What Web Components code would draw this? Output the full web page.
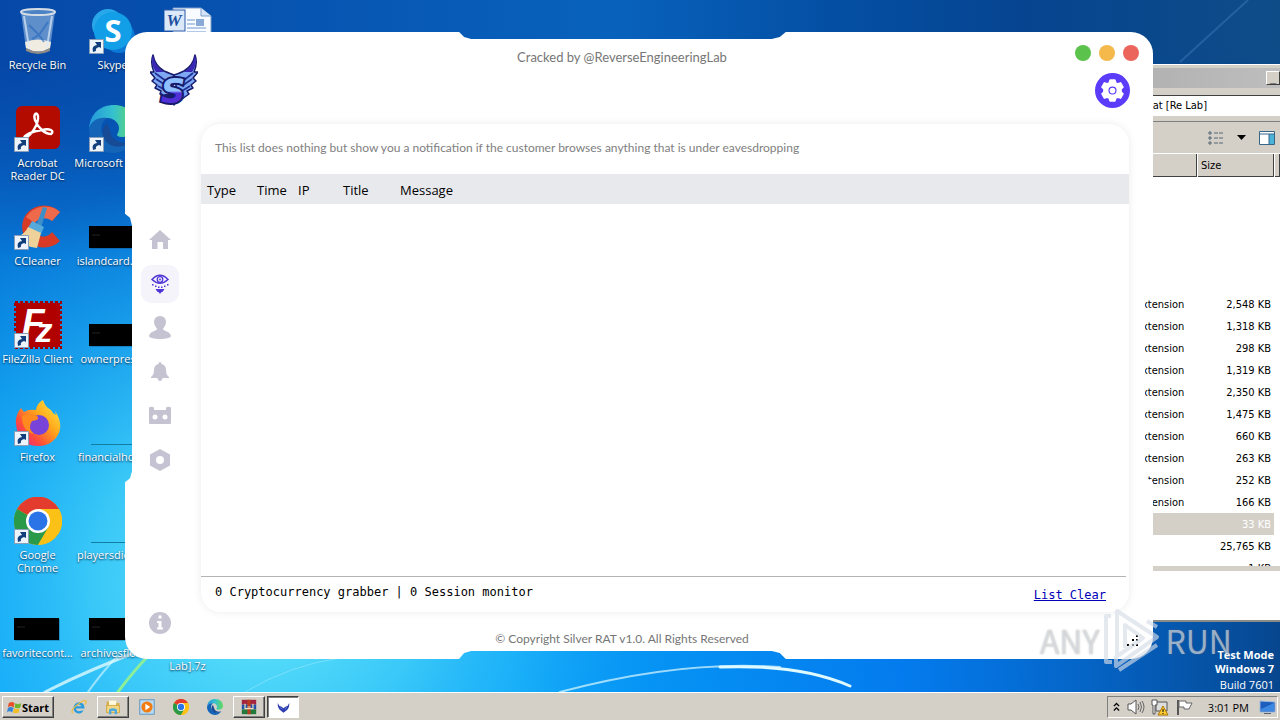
<!DOCTYPE html>
<html lang="en">
<head>
<meta charset="utf-8">
<title>Silver RAT</title>
<style>
    html, body {
        height: 100%;
        margin: 0;
    }
    body {
        overflow: hidden;
        font: 11px/13px "Open Sans", "Noto Sans", sans-serif;
        color: #000;
    }
</style>
</head>
<body>
<desk-top>
    <desk-icon slot="icons" icon="bin">Recycle Bin</desk-icon>
    <desk-icon slot="icons" icon="acrobat" shortcut>Acrobat<br>Reader DC</desk-icon>
    <desk-icon slot="icons" icon="ccleaner" shortcut>CCleaner</desk-icon>
    <desk-icon slot="icons" icon="filezilla" shortcut>FileZilla Client</desk-icon>
    <desk-icon slot="icons" icon="firefox" shortcut>Firefox</desk-icon>
    <desk-icon slot="icons" icon="chrome" shortcut>Google<br>Chrome</desk-icon>
    <desk-icon slot="icons" icon="thumb">favoritecont...</desk-icon>
    <desk-icon slot="icons" icon="skype" shortcut>Skype</desk-icon>
    <desk-icon slot="icons" icon="edge" shortcut>Microsoft Edge</desk-icon>
    <desk-icon slot="icons" icon="thumb">islandcard.jpg</desk-icon>
    <desk-icon slot="icons" icon="thumb">ownerpres...</desk-icon>
    <desk-icon slot="icons" icon="line">financialhot...</desk-icon>
    <desk-icon slot="icons" icon="line">playersdie.jpg</desk-icon>
    <desk-icon slot="icons" icon="thumb">archivesflo...</desk-icon>
    <desk-icon slot="icons" icon="word"></desk-icon>
    <desk-icon slot="icons" class="last" icon="none"><br>Lab].7z</desk-icon>

    <file-explorer slot="windows"></file-explorer>
    <silver-window slot="windows" heading="Cracked by @ReverseEngineeringLab">
        <nav-item slot="nav" icon="home" label="Home"></nav-item>
        <nav-item slot="nav" icon="eye" label="Monitor" active></nav-item>
        <nav-item slot="nav" icon="user" label="Clients"></nav-item>
        <nav-item slot="nav" icon="bell" label="Notifications"></nav-item>
        <nav-item slot="nav" icon="robot" label="Builder"></nav-item>
        <nav-item slot="nav" icon="nut" label="Options"></nav-item>
        <nav-item slot="about" icon="info" label="About"></nav-item>
        <monitor-card></monitor-card>
        <span slot="footer">© Copyright Silver RAT v1.0. All Rights Reserved</span>
    </silver-window>
    <task-bar slot="taskbar"></task-bar>
</desk-top>

<script>
const ICONS = {
    none: ["0 0 48 48", ""],
    bin: ["0 0 48 48", `
        <path d="M7 5 L12 42 Q24 50 36 42 L41 5Z" fill="#a9c8e6" fill-opacity=".55"/>
        <path d="M11 35 Q24 30 37 35 L36 41 Q24 48 12 41Z" fill="#f1ece2"/>
        <path d="M12 41 Q24 48 36 41 L36 44 Q24 50 12 44Z" fill="#8e8b86"/>
        <path d="M10 9 L15 40 M38 9 L33 40" stroke="#dbeaf8" stroke-width="2" fill="none" opacity=".7"/>
        <path d="M15 18 L25 28 L34 15 M18 32 L25 28 L30 35" stroke="#2468bd" stroke-width="2" fill="none" opacity=".6"/>
        <ellipse cx="24" cy="5" rx="17" ry="3" fill="#4b83c4" stroke="#d5dde4" stroke-width="2"/>`],
    acrobat: ["0 0 48 48", `
        <rect x="2" y="1" width="44" height="43" rx="6" fill="#b30b00"/>
        <path d="M10 34 C17 31 25 19 24 11 C23 6 19 9 21 15 C24 23 31 29 37 29 C41 26 36 23 28 25 C19 26 9 30 10 34Z" fill="none" stroke="#fff" stroke-width="2.4"/>`],
    ccleaner: ["0 0 48 48", `
        <path d="M46 9 A22 21 0 1 0 46 38 L38 29 A11 10 0 1 1 38 18Z" fill="#d93a25"/>
        <path d="M46 9 A22 21 0 0 0 12 14 L21 20 A11 10 0 0 1 38 18Z" fill="#ee6a4b"/>
        <path d="M29 4 L33 5 L27 25 L22 23Z" fill="#3c8fc8"/>
        <path d="M18 18 L30 24 L27 31 L14 25Z" fill="#55aadc"/>
        <path d="M14 24 L27 30 L23 45 Q10 44 3 34Q11 31 14 24Z" fill="#efd29a"/>`],
    filezilla: ["0 0 48 48", `
        <rect x="2" y="2" width="44" height="44" fill="#b00000"/>
        <rect x="1" y="1" width="46" height="46" fill="none" stroke="#a00000" stroke-width="2" stroke-dasharray="3 2"/>
        <text x="8" y="34" font-family="Liberation Sans" font-size="37" font-weight="bold" font-style="italic" fill="#fff">F<tspan font-size="34" dx="-9" dy="7">z</tspan></text>`],
    firefox: ["0 0 48 48", `
        <defs><linearGradient id="ff" x1="1" y1="0" x2="0" y2="1"><stop offset="0" stop-color="#fff04a"/><stop offset=".4" stop-color="#ffa71b"/><stop offset=".7" stop-color="#ff4b3b"/><stop offset="1" stop-color="#e3189d"/></linearGradient></defs>
        <path d="M2 25 Q1 16 7 9 L10 13 Q14 10 22 11 Q23 4 29 1 Q31 8 37 11 Q38 14 42 16 L41 12 Q51 27 42 39 Q34 48 23 47 Q4 46 2 25Z" fill="url(#ff)"/>
        <circle cx="25" cy="26" r="10" fill="#7843d8"/>
        <path d="M8 17 Q15 13 23 17 Q27 21 18 22 Q13 29 20 35 Q8 33 8 17Z" fill="#ff8a20"/>`],
    chrome: ["0 0 48 48", `
        <circle cx="24" cy="24" r="24" fill="#fbc116"/>
        <path d="M24 24 L3 12 A24 24 0 0 1 45 12Z" fill="#e33b2e"/>
        <path d="M24 24 L3 12 A24 24 0 0 0 24 48 L35 30Z" fill="#2a9a48"/>
        <path d="M24 12 H45 A24 24 0 0 1 24 48 L35 29Z" fill="#fbc116"/>
        <circle cx="24" cy="24" r="12" fill="#fff"/><circle cx="24" cy="24" r="9.500" fill="#2b74e8"/>`],
    skype: ["0 0 48 48", `
        <circle cx="19" cy="18" r="16" fill="#28a8ea"/><circle cx="30" cy="30" r="16" fill="#0a78d4"/>
        <circle cx="24" cy="24" r="19" fill="#139fe8"/>
        <text x="24" y="35" text-anchor="middle" font-family="Open Sans" font-size="31" font-weight="bold" fill="#fff">S</text>`],
    edge: ["0 0 48 48", `
        <defs><linearGradient id="eg"><stop offset="0" stop-color="#2497dc"/><stop offset=".5" stop-color="#35c1cf"/><stop offset="1" stop-color="#65d95b"/></linearGradient></defs>
        <path d="M0 24 C1 8 12 0 25 0 C39 0 48 10 48 20 C48 29 41 32 34 32 C28 32 27 30 29 28 C33 19 25 13 18 13 C9 13 2 17 0 24Z" fill="url(#eg)"/>
        <path d="M0 24 C2 15 10 12 18 13 C12 17 11 24 14 31 C18 40 29 44 43 37 C37 46 30 48 24 48 C10 48 0 37 0 24Z" fill="#1465b7"/>
        <path d="M18 18 C11 24 13 34 20 39 C28 44 37 41 43 37 C34 40 24 36 22 29Z" fill="#174b95"/>`],
    word: ["0 0 48 48", `
        <path d="M9 1 H37 L47 9 V47 H9Z" fill="#f8fbff" stroke="#7d9fca"/>
        <path d="M37 1 V9 H47" fill="#d4e3f5" stroke="#7d9fca"/>
        <path d="M23 13 H31 M23 17 H31 M23 21 H42 M23 25 H42" stroke="#6e97ce"/>
        <rect x="32" y="12" width="8" height="7" fill="#86a9d8"/>
        <rect x="0" y="3" width="21" height="21" fill="#dbe8f8" stroke="#2a5ba8"/>
        <text x="10" y="19" text-anchor="middle" font-family="Liberation Serif" font-size="17" font-weight="bold" font-style="italic" fill="#1d4f9e">W</text>`],
    thumb: ["0 0 48 48", `<rect x="1" y="24" width="45" height="22" fill="#053a66" opacity=".3"/><rect y="23" width="45" height="22"/><path d="M3 32h8" stroke="#222"/>`],
    line: ["0 0 48 48", `<path d="M2 45.500H48" stroke="#0f7ea0"/>`],
    home: ["0 0 22 22", `<path d="M11 1 L22 11 H19 V20 H14 V13 H8.500 V20 H3 V11 H0Z"/>`],
    eye: ["0 0 22 22", `
        <path d="M3 6.500 Q11 -2 19 6.500 Q11 14 3 6.500Z" fill="none" stroke="currentColor" stroke-width="1.500"/>
        <circle cx="11" cy="6.500" r="2.800" fill="none" stroke="currentColor" stroke-width="1.300"/><circle cx="11" cy="6.500" r="1"/>
        <path d="M3 11h1.500v1.500H3zM6 12.500h1.500V14H6zM9 13.500h1.500V15H9zM12 13.500h1.500V15H12zM15 12.500h1.500V14H15zM18 11h1.500v1.500H18z"/>
        <path d="M6.500 16h9l-2 3h-1l-1.500 2-1.500-2h-1z"/>`],
    user: ["0 0 22 24", `<path d="M11 0 C15 0 17 3 17 6 C17 9 15 11 14 13 C14 15 21 15 22 20 C22 24 0 24 0 20 C1 15 8 15 8 13 C7 11 5 9 5 6 C5 3 7 0 11 0Z"/>`],
    bell: ["0 0 22 22", `<path d="M11 1 Q12.500 1 12.500 3 Q17 4 17 9 Q17 14 20 16 V17 H2 V16 Q5 14 5 9 Q5 4 9.500 3 Q9.500 1 11 1Z"/><path d="M8.500 17h5q-.5 3-2.500 3t-2.500-3z"/>`],
    robot: ["0 0 22 22", `<path fill-rule="evenodd" d="M0 2.500 Q2.500 1 5 2.500 V5 H17 V2.500 Q19.500 1 22 2.500 V18 Q22 19 21 19 H1 Q0 19 0 18Z M6 9.500a2.500 2.500 0 1 0 0 5a2.500 2.500 0 1 0 0-5z M16 9.500a2.500 2.500 0 1 0 0 5a2.500 2.500 0 1 0 0-5z"/>`],
    nut: ["0 0 22 22", `<path fill-rule="evenodd" d="M11 0 L21 5.500 V16.500 L11 22 L1 16.500 V5.500Z M11 7a4 4 0 1 0 0 8a4 4 0 1 0 0-8z"/>`],
    info: ["0 0 22 22", `<circle cx="11" cy="11" r="11"/><path d="M9.500 3.500h3v3h-3zM8 9h4.500v6.500H14v2H8v-2h1.500V11H8z" fill="#fff"/>`],
    gear: ["0 0 24 24", `<path stroke="currentColor" stroke-width="1.500" stroke-linejoin="round" fill-rule="evenodd" d="M9.500 1h5l1 3 2 1 3-1 2.500 4.500-2 2v3l2 2-2.500 4.500-3-1-2 1-1 3h-5l-1-3-2-1-3 1L1 15.500l2-2v-3l-2-2L3.500 4l3 1 2-1z M12 7a5 5 0 1 0 0 10a5 5 0 1 0 0-10z"/><circle cx="12" cy="12" r="3"/>`],
    wings: ["0 0 48 52", `
        <defs><linearGradient id="steel" x1="0" y1="0" x2="0" y2="1"><stop offset=".5" stop-color="#8fc0ff"/><stop offset=".55" stop-color="#5130d8"/></linearGradient></defs>
        <g fill="#7fa8f4" stroke="#171b6c" stroke-width="1.500" stroke-linejoin="round">
            <path d="M3 1 Q5 12 14 17 Q21 20 24 21 L22 42 L16 45 L10 40 L11 37 L5 34 L7 31 L2 27 L5 24 L0 18 L4 18 Q0 9 3 1Z"/>
            <path d="M45 1 Q43 12 34 17 Q28 20 24 21 L28 42 L32 45 L39 40 L37 37 L43 34 L41 31 L46 27 L43 24 L48 18 L44 18 Q48 9 45 1Z"/>
        </g>
        <path d="M3 1 Q5 13 14 18 L6 18 Q0 10 3 1Z M45 1 Q43 13 34 18 L42 18 Q48 10 45 1Z" fill="#3a28b4"/>
        <path d="M5 19 L16 27 M6 25 L17 32 M8 32 L17 37 M43 19 L33 27 M42 25 L32 32 M40 32 L32 37" stroke="#1f3192" stroke-width="1.800"/>
        <path d="M14 40 L24 52 L34 40Z" fill="#171b6c"/>
        <text x="23" y="49" text-anchor="middle" font-family="DejaVu Sans" font-size="34" font-weight="bold" font-style="italic" fill="url(#steel)" stroke="#171b6c" stroke-width="4" paint-order="stroke">S</text>`],
    ie: ["0 0 20 20", `<path d="M17 12 H6 Q7 16 11 15 L16 14 Q13 19 9 18 Q3 17 3 11 Q4 4 11 4 Q17 5 17 12Z M7 9 H13 Q12 7 10 7 Q8 7 7 9Z" fill="#2c9bdc" fill-rule="evenodd"/><path d="M2 18 Q-1 14 8 7 Q17 0 19 3 Q19 5 17 7" fill="none" stroke="#efbd3a" stroke-width="1.500"/>`],
    folder: ["0 0 20 20", `<path d="M2 3h7l1 2h8v12H2z" fill="#d9ad48"/><path d="M5 2h9v8H5z" fill="#fff8dc"/><path d="M2 8h16v9H2z" fill="#f5d77f" stroke="#c99f3c"/><path d="M5 19v-6q5-3 10 0v6h-3v-4H8v4z" fill="#4fa9dd"/>`],
    player: ["0 0 20 20", `<rect x="1" y="1" width="18" height="18" fill="#b9daf1" stroke="#4a88bd"/><circle cx="10" cy="10" r="7" fill="#f07c13"/><path d="M8 6v8l6-4z" fill="#fff"/>`],
    rar: ["0 0 20 20", `<path d="M1 1h18v6H1z" fill="#a3243c"/><path d="M1 7h18v6H1z" fill="#2452a8"/><path d="M1 13h18v6H1z" fill="#23783b"/><path d="M8 1h4v18H8z" fill="#b73c20"/><path d="M5 6v6h10V6M8 10h4" fill="none" stroke="#eee0ba" stroke-width="1.500"/>`],
    mini: ["0 0 20 20", `<path d="M1 3 Q3 8 7 9 L10 11 L13 9 Q17 8 19 3 Q19 12 14 15 L10 18 L6 15 Q1 12 1 3Z" fill="#2c3cae"/><path d="M5 10l3 3M15 10l-3 3" stroke="#8fb4f8"/>`],
    flag7: ["0 0 18 18", `<path d="M2 4 Q6 1 9 4 L8 9 Q4 6 1 9Z" fill="#e8502a"/><path d="M10 4 Q13 6 17 4 L16 9 Q12 11 9 9Z" fill="#6fb52c"/><path d="M1 10 Q4 7 8 10 L6 15 Q3 12 0 15Z" fill="#3586d6"/><path d="M9 10 Q12 12 15 10 L14 15 Q10 17 7 15Z" fill="#f4bd25"/>`],
    chevrons: ["0 0 10 16", `<path d="M2 7 L5 4 L8 7 M2 12 L5 9 L8 12" fill="none" stroke="#000" stroke-width="1.500"/>`],
    sound: ["0 0 18 18", `<path d="M1 6h3l5-4v14l-5-4H1z" fill="#fff" stroke="#555"/><path d="M11 6q2 3 0 6M13 4q3 5 0 10M15 3q4 6 0 12" fill="none" stroke="#666"/>`],
    network: ["0 0 18 18", `<path d="M5 4h11v9H5z" fill="#ddd" stroke="#555"/><path d="M1 2h5v5H4v9H2V7H1z" fill="#fff" stroke="#555"/><path d="M12 8l5 9H7z" fill="#fc3" stroke="#a70"/><path d="M12 11v3M12 15v1" stroke="#000"/>`],
    flag: ["0 0 18 18", `<path d="M3 2v15" stroke="#555" stroke-width="2"/><path d="M4 3h7v2h6l-3 6H9V9H4z" fill="#fff" stroke="#666"/>`],
    screen: ["0 0 18 18", `<path d="M2 3l15 1v10H2z" fill="#1d5dbd" stroke="#9bb8dc"/><path d="M3 11l13-6v8H3z" fill="#3d88e0"/><path d="M6 15h7v1H6z" fill="#56616d"/>`]
};

const icon = (name, width = 22, height = width) => {
    const [viewBox, shapes] = ICONS[name];
    return `<svg viewBox="${viewBox}" width="${width}" height="${height}" fill="currentColor" aria-hidden="true">${shapes}</svg>`;
};

class DeskTop extends HTMLElement {
    connectedCallback() {
        this.attachShadow({mode: "open"}).innerHTML = `
            <style>
                :host {
                    display: flex;
                    flex-direction: column;
                    height: 100vh;
                }
                main {
                    position: relative;
                    flex: 1;
                    min-height: 0;
                    overflow: hidden;
                }
                .wallpaper {
                    position: absolute;
                    inset: 0;
                    width: 100%;
                    height: 100%;
                }
                .icons {
                    position: relative;
                    display: grid;
                    grid-auto-flow: column;
                    grid-template-rows: repeat(7, 98px);
                    grid-auto-columns: 75px;
                    padding-top: 7px;
                }
                ::slotted(.last) {
                    grid-row: 7;
                }
                .build {
                    position: absolute;
                    right: 6px;
                    bottom: 0;
                    color: #fff;
                    text-align: right;
                    line-height: 14px;
                }
                .build p {
                    margin: 0 0 2px;
                    font-weight: bold;
                }
            </style>
            <main>
                <svg class="wallpaper" viewBox="0 0 1280 692" preserveAspectRatio="none" aria-hidden="true">
                    <defs>
                        <linearGradient id="sky" x1="0" y1="0" x2="0" y2="1">
                            <stop offset="0" stop-color="#0648a8"/>
                            <stop offset=".35" stop-color="#0877d6"/>
                            <stop offset=".7" stop-color="#059cf2"/>
                            <stop offset="1" stop-color="#06a2fa"/>
                        </linearGradient>
                        <radialGradient id="glow" gradientUnits="userSpaceOnUse" cx="260" cy="580" r="420">
                            <stop offset="0" stop-color="#6beafa"/>
                            <stop offset=".4" stop-color="#46d2f8" stop-opacity=".8"/>
                            <stop offset="1" stop-color="#18a8f8" stop-opacity="0"/>
                        </radialGradient>
                        <linearGradient id="shade">
                            <stop offset=".4" stop-color="#0468e4" stop-opacity="0"/>
                            <stop offset=".7" stop-color="#036cea" stop-opacity=".7"/>
                            <stop offset="1" stop-color="#06468e"/>
                        </linearGradient>
                        <linearGradient id="band">
                            <stop offset="0" stop-color="#0648a8"/>
                            <stop offset=".48" stop-color="#0862bc"/>
                            <stop offset=".65" stop-color="#044fa4"/>
                            <stop offset=".8" stop-color="#064490"/>
                            <stop offset="1" stop-color="#0e4c88"/>
                        </linearGradient>
                        <linearGradient id="fade" x1="0" y1="0" x2="0" y2="1">
                            <stop offset=".2" stop-color="#fff"/>
                            <stop offset="1" stop-color="#000"/>
                        </linearGradient>
                        <mask id="upper"><rect width="1280" height="260" fill="url(#fade)"/></mask>
                    </defs>
                    <rect width="1280" height="692" fill="url(#sky)"/>
                    <rect width="1280" height="692" fill="url(#glow)"/>
                    <rect width="1280" height="692" fill="url(#shade)"/>
                    <rect width="1280" height="260" fill="url(#band)" mask="url(#upper)"/>
                    <path d="M1180 62 L1248 0" stroke="#3a78b8" stroke-width="2" opacity=".5"/>
                    <g fill="none" stroke="#dffaff" stroke-linecap="round">
                        <path d="M150 647 Q90 669 45 692" stroke-width="3" opacity=".8"/>
                        <path d="M118 655 Q100 675 88 692" stroke-width="2" opacity=".6"/>
                        <path d="M155 649 Q134 670 118 692" stroke="#8dee9a" stroke-width="3"/>
                        <path d="M560 692 Q680 660 780 667" stroke-width="2" opacity=".7"/>
                        <path d="M720 667 Q800 664 850 686" stroke-width="3"/>
                        <path d="M245 692 Q290 665 340 658" opacity=".3"/>
                    </g>
                </svg>
                <div class="icons"><slot name="icons"></slot></div>
                <div class="build"><p>Test Mode<br>Windows 7</p>Build 7601</div>
                <slot name="windows"></slot>
                <play-mark></play-mark>
            </main>
            <slot name="taskbar"></slot>
        `;
    }
}

class DeskIcon extends HTMLElement {
    connectedCallback() {
        this.attachShadow({mode: "open"}).innerHTML = `
            <style>
                :host {
                    display: flex;
                    flex-direction: column;
                    align-items: center;
                    gap: 3px;
                    color: #fff;
                    text-align: center;
                    text-shadow: 0 1px 2px #024;
                    white-space: nowrap;
                }
                .art {
                    position: relative;
                    width: 48px;
                    height: 48px;
                    color: #000;
                    text-shadow: none;
                }
                .arrow {
                    position: absolute;
                    left: 0;
                    bottom: 1px;
                }
            </style>
            <div class="art">
                ${icon(this.getAttribute("icon"), 48)}
                ${this.hasAttribute("shortcut") ? `
                    <svg class="arrow" viewBox="0 0 15 15" width="15" height="15">
                        <path d="M.5.5h14v14H.5z" fill="#eef4fb" stroke="#8ba0b8"/>
                        <path d="M4 13 Q2 7 8 6 L6 3 L12 3 L12 9 L10 8 Q6 9 7 12Z" fill="#123f7c"/>
                    </svg>` : ""}
            </div>
            <span><slot></slot></span>
        `;
    }
}

class FileExplorer extends HTMLElement {
    connectedCallback() {
        const sizes = ["2,548", "1,318", "298", "1,319", "2,350", "1,475", "660", "263", "252", "166", "33", "25,765", "1"];
        this.attachShadow({mode: "open"}).innerHTML = `
            <style>
                :host {
                    position: absolute;
                    top: 64px;
                    right: 0;
                    bottom: 70px;
                    width: 220px;
                    display: flex;
                    flex-direction: column;
                    background: #d4d0c8;
                    border-top: 1px solid #fff;
                    border-bottom: 2px solid #8a8a86;
                    box-sizing: border-box;
                    font-family: "DejaVu Sans Condensed", "Open Sans", sans-serif;
                }
                .title {
                    display: flex;
                    justify-content: flex-end;
                    align-items: center;
                    height: 20px;
                    margin-top: 3px;
                    background: linear-gradient(90deg, #aaa, #bebebe);
                }
                .title button {
                    width: 14px;
                    height: 14px;
                    padding: 0;
                    border: 1px solid;
                    border-color: #fff #404040 #404040 #fff;
                    background: #d4d0c8;
                    font: bold 11px/8px "Liberation Sans", sans-serif;
                }
                .address {
                    margin: 7px 0 5px;
                    padding: 0 73px 0 0;
                    border: 1px solid #404040;
                    border-width: 1px 0;
                    border-bottom-color: #fff;
                    background: #fff;
                    line-height: 19px;
                    text-align: right;
                }
                .tools {
                    display: flex;
                    justify-content: flex-end;
                    align-items: center;
                    gap: 13px;
                    height: 31px;
                    padding-right: 5px;
                    border-top: 1px solid #808080;
                }
                .list {
                    flex: 1;
                    overflow: hidden;
                    background: #fff;
                }
                table {
                    width: 100%;
                    border-collapse: collapse;
                    table-layout: fixed;
                }
                th {
                    height: 24px;
                    padding: 0 4px;
                    background: #d4d0c8;
                    box-shadow: inset 1px 1px #fff, inset -1px -1px #404040;
                    font-weight: normal;
                    text-align: left;
                    box-sizing: border-box;
                }
                th:nth-child(2) {
                    width: 77px;
                }
                th:nth-child(3) {
                    width: 6px;
                    padding: 0;
                }
                td {
                    height: 22px;
                    padding: 0;
                }
                td:first-child {
                    padding-left: 76px;
                }
                td:nth-child(2) {
                    padding-right: 3px;
                    text-align: right;
                }
                .group td {
                    height: 116px;
                }
                .picked td:not(:last-child) {
                    background: #d4d0c8;
                    color: #fff;
                }
                .status {
                    height: 49px;
                    background: #fff;
                    border-top: 5px solid #d4d0c8;
                }
            </style>
            <div class="title"><button aria-label="Minimize">_</button></div>
            <div class="address">at [Re Lab]</div>
            <div class="tools">
                <svg width="16" height="14" viewBox="0 0 16 14"><path d="M1 1h2v2H1zM1 6h2v2H1zM1 11h2v2H1z" fill="none" stroke="#567"/><path d="M6 2h4M11 2h4M6 7h4M11 7h4M6 12h4M11 12h4" stroke="#567"/></svg>
                <svg width="9" height="5" viewBox="0 0 9 5"><path d="M0 0h9L4.500 5z"/></svg>
                <svg width="16" height="14" viewBox="0 0 16 14"><path d="M.5.5h15v13H.5z" fill="#fff" stroke="#36668a"/><path d="M10 3h5v10h-5z" fill="#4cb3d8"/><path d="M1 3h14M10 3v10" stroke="#36668a"/></svg>
            </div>
            <div class="list">
                <table>
                    <thead><tr><th></th><th>Size</th><th></th></tr></thead>
                    <tbody>
                        <tr class="group"><td colspan="3"></td></tr>
                        ${sizes.map((size, i) => `<tr class="${size === "33" ? "picked" : ""}"><td>${i < 10 ? "extension" : ""}</td><td>${size} KB</td><td></td></tr>`).join("")}
                    </tbody>
                </table>
            </div>
            <div class="status"></div>
        `;
    }
}

class SilverWindow extends HTMLElement {
    connectedCallback() {
        this.attachShadow({mode: "open"}).innerHTML = `
            <style>
                :host {
                    position: absolute;
                    inset: 32px 127px 33px 125px;
                    display: grid;
                    grid-template: 92px 1fr 47px / 70px 1fr;
                    background: #fff;
                    border-radius: 22px;
                    font: 12px/16px Lato, "Open Sans", sans-serif;
                    color: #767676;
                    /* shallow rounded notch in the middle of every edge */
                    --l: 32.5%;
                    --r: 63.5%;
                    clip-path: polygon(
                        0 0, var(--l) 0, calc(var(--l) + 5px) 5px, calc(var(--l) + 12px) 7px,
                        calc(var(--r) - 6px) 7px, calc(var(--r) + 2px) 5px, calc(var(--r) + 8px) 0, 100% 0,
                        100% 29%, calc(100% - 5px) calc(29% + 4px), calc(100% - 8px) calc(29% + 12px),
                        calc(100% - 8px) calc(71% - 6px), calc(100% - 5px) calc(71% + 1px), 100% calc(71% + 5px),
                        100% 100%, calc(var(--r) + 8px) 100%, calc(var(--r) + 2px) calc(100% - 6px), calc(var(--r) - 6px) calc(100% - 8px),
                        calc(var(--l) + 12px) calc(100% - 8px), calc(var(--l) + 5px) calc(100% - 6px), var(--l) 100%, 0 100%,
                        0 calc(71% + 5px), 5px calc(71% + 1px), 7px calc(71% - 6px),
                        7px calc(29% + 12px), 5px calc(29% + 4px), 0 29%);
                }
                header {
                    grid-column: 1 / -1;
                    display: grid;
                    grid-template-columns: 76px 1fr 110px;
                }
                .logo {
                    padding: 22px 0 0 25px;
                }
                h1 {
                    margin: 17px 0 0;
                    font: inherit;
                    font-size: 13px;
                    text-align: center;
                }
                .controls {
                    display: flex;
                    flex-direction: column;
                    align-items: flex-end;
                    gap: 12px;
                    padding: 13px 14px 0 0;
                }
                .dots {
                    display: flex;
                    gap: 8px;
                }
                button {
                    padding: 0;
                    border: 0;
                    border-radius: 50%;
                }
                .dots button {
                    width: 16px;
                    height: 16px;
                    background: var(--dot);
                }
                .settings {
                    display: grid;
                    place-items: center;
                    width: 35px;
                    height: 35px;
                    margin-right: 9px;
                    background: #5a3cfa;
                    color: #fff;
                }
                nav {
                    grid-row: 2 / 4;
                    display: flex;
                    flex-direction: column;
                    padding: 94px 0 14px;
                }
                .about {
                    margin-top: auto;
                }
                section {
                    display: grid;
                    padding: 0 24px 0 6px;
                }
                footer {
                    display: grid;
                    grid-template-columns: 1fr 104px;
                    align-items: center;
                    padding-top: 6px;
                    text-align: center;
                }
                .grip {
                    place-self: end;
                    margin: 0 15px 13px 0;
                }
            </style>
            <header>
                <div class="logo">${icon("wings", 48, 52)}</div>
                <h1>${this.getAttribute("heading")}</h1>
                <div class="controls">
                    <div class="dots">
                        <button style="--dot:#5bc34c" aria-label="Minimize"></button>
                        <button style="--dot:#f5b84a" aria-label="Maximize"></button>
                        <button style="--dot:#ec655c" aria-label="Close"></button>
                    </div>
                    <button class="settings" aria-label="Settings">${icon("gear", 23)}</button>
                </div>
            </header>
            <nav>
                <slot name="nav"></slot>
                <div class="about"><slot name="about"></slot></div>
            </nav>
            <section><slot></slot></section>
            <footer>
                <slot name="footer"></slot>
                <svg class="grip" width="11" height="11" viewBox="0 0 11 11" fill="#000"><path d="M9 0h2v2H9zM5 4h2v2H5zM9 4h2v2H9zM0 9h2v2H0zM5 9h2v2H5zM9 9h2v2H9z"/></svg>
            </footer>
        `;
    }
}

class NavItem extends HTMLElement {
    connectedCallback() {
        const name = this.getAttribute("icon");
        const tall = name === "user" ? 24 : 22;
        this.attachShadow({mode: "open"}).innerHTML = `
            <style>
                :host {
                    display: grid;
                    place-items: center;
                    height: 44px;
                }
                button {
                    display: grid;
                    place-items: center;
                    width: 38px;
                    height: 38px;
                    padding: 0;
                    border: 0;
                    border-radius: 10px;
                    background: none;
                    color: #c5c3d1;
                }
                :host([active]) button {
                    background: #f5f4fb;
                    color: #5136d6;
                }
            </style>
            <button aria-label="${this.getAttribute("label")}">${icon(name, 22, tall)}</button>
        `;
    }
}

class MonitorCard extends HTMLElement {
    connectedCallback() {
        this.attachShadow({mode: "open"}).innerHTML = `
            <style>
                :host {
                    display: flex;
                    flex-direction: column;
                    background: #fff;
                    border-radius: 20px;
                    box-shadow: 0 0 8px rgba(0, 0, 0, .08);
                }
                p {
                    margin: 0;
                    padding: 0 14px;
                    color: #808080;
                    line-height: 48px;
                    height: 50px;
                }
                table {
                    width: 100%;
                    border-collapse: collapse;
                    table-layout: fixed;
                    background: #e8e9ed;
                    color: #000;
                    font: 13px/18px "Open Sans", sans-serif;
                }
                th {
                    height: 28px;
                    padding: 2px 0 0 6px;
                    font-weight: normal;
                    text-align: left;
                    white-space: nowrap;
                }
                .status {
                    display: flex;
                    justify-content: space-between;
                    height: 35px;
                    margin: auto 3px 0 0;
                    padding: 0 20px 0 14px;
                    border-top: 1px solid #b4b4b4;
                    color: #000;
                    font: 12px/30px "DejaVu Sans Mono", monospace;
                }
                a {
                    color: #0000b8;
                    line-height: 36px;
                }
            </style>
            <p>This list does nothing but show you a notification if the customer browses anything that is under eavesdropping</p>
            <table>
                <colgroup><col width="50"><col width="41"><col width="45"><col width="57"><col></colgroup>
                <thead><tr><th>Type</th><th>Time</th><th>IP</th><th>Title</th><th>Message</th></tr></thead>
                <tbody></tbody>
            </table>
            <div class="status">
                <span>0 Cryptocurrency grabber | 0 Session monitor</span>
                <a href="#clear">List Clear</a>
            </div>
        `;
    }
}

class PlayMark extends HTMLElement {
    connectedCallback() {
        this.attachShadow({mode: "open"}).innerHTML = `
            <style>
                :host {
                    position: absolute;
                    right: 48px;
                    bottom: 20px;
                    display: flex;
                    align-items: center;
                    gap: 4px;
                    color: rgba(226, 230, 236, .6);
                    font: 32px/40px "Noto Sans CJK SC", sans-serif;
                    text-shadow: 0 0 2px rgba(120, 120, 120, .5);
                    pointer-events: none;
                }
            </style>
            <span>ANY</span>
            <svg width="58" height="64" viewBox="0 0 58 64" fill="none" stroke="#d5dce6" stroke-opacity=".65" stroke-width="4" stroke-linejoin="round">
                <path d="M14 48 V3 L54 29 L13 58 V49 L40 30 L22 17 V40"/>
                <path d="M8 8 H3 V54 H9 M44 13 L54 19 M54 37 L16 62"/>
            </svg>
            <span>RUN</span>
        `;
    }
}

class TaskBar extends HTMLElement {
    connectedCallback() {
        const tasks = [
            ["ie", "Internet Explorer", ""],
            ["folder", "Windows Explorer", "open"],
            ["player", "Media Player", ""],
            ["chrome", "Google Chrome", ""],
            ["edge", "Microsoft Edge", ""],
            ["rar", "WinRAR", "open"],
            ["mini", "Silver RAT", "active"]
        ];
        this.attachShadow({mode: "open"}).innerHTML = `
            <style>
                :host {
                    display: flex;
                    align-items: center;
                    height: 28px;
                    padding: 1px 2px 0;
                    box-sizing: border-box;
                    border-top: 1px solid #fff;
                    background: #d4d0c8;
                }
                button {
                    display: flex;
                    align-items: center;
                    justify-content: center;
                    width: 32px;
                    height: 22px;
                    padding: 0;
                    border: 1px solid transparent;
                    background: none;
                    font: inherit;
                }
                .start, .open {
                    border-color: #fff #404040 #404040 #fff;
                    box-shadow: inset -1px -1px #808080;
                }
                .start {
                    width: 52px;
                    margin-right: 9px;
                    font-weight: bold;
                }
                .tasks {
                    display: flex;
                    gap: 2px;
                }
                .active {
                    border-color: #404040 #fff #fff #404040;
                    box-shadow: inset 1px 1px #808080;
                    background: #fff;
                }
                .tray {
                    display: flex;
                    align-items: center;
                    gap: 6px;
                    height: 20px;
                    margin-left: auto;
                    padding: 0 1px 0 4px;
                    border: 1px solid;
                    border-color: #808080 #fff #fff #808080;
                }
                time {
                    margin: 0 3px 0 9px;
                }
            </style>
            <button class="start">${icon("flag7", 15)}Start</button>
            <div class="tasks">
                ${tasks.map(([name, label, state]) => `<button class="${state}" aria-label="${label}">${icon(name, name === "mini" ? 13 : 16)}</button>`).join("")}
            </div>
            <div class="tray">
                ${icon("chevrons", 9, 14)}
                ${icon("sound", 18)}${icon("network", 18)}${icon("flag", 18)}
                <time>3:01 PM</time>
                ${icon("screen", 18)}
            </div>
        `;
    }
}

customElements.define("play-mark", PlayMark);
customElements.define("nav-item", NavItem);
customElements.define("monitor-card", MonitorCard);
customElements.define("silver-window", SilverWindow);
customElements.define("file-explorer", FileExplorer);
customElements.define("desk-icon", DeskIcon);
customElements.define("task-bar", TaskBar);
customElements.define("desk-top", DeskTop);
</script>
</body>
</html>
